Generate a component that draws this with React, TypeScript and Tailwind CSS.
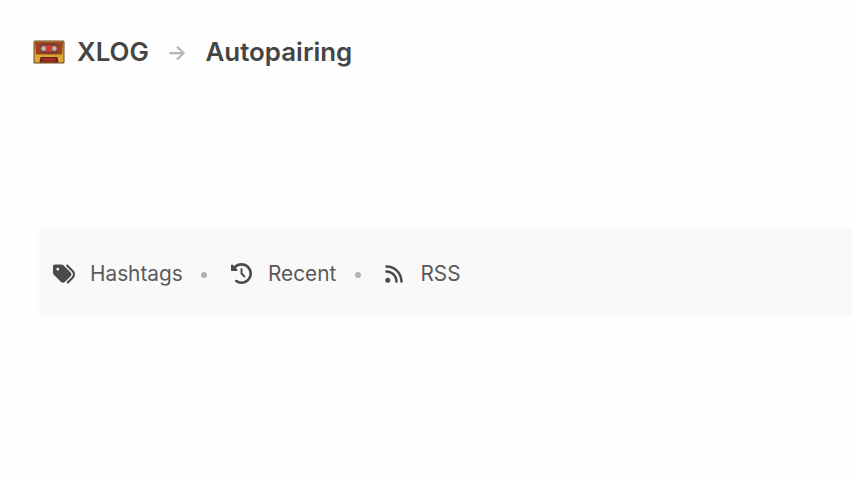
import { Fragment } from "react";
import { FaTags, FaClockRotateLeft, FaRss } from "react-icons/fa6";

function Cassette() {
  return (
    <svg width="32" height="24" viewBox="0 0 32 24" aria-hidden="true">
      <rect x="0.5" y="0.5" width="31" height="23" rx="1.5" fill="#6a4626" />
      <rect x="1.5" y="1.5" width="29" height="21" rx="1" fill="#dba833" />
      <path d="M2 2H30L29 14.5H3Z" fill="#9c4420" />
      <rect x="7" y="4" width="18" height="9" rx="3" fill="#57393a" />
      <rect x="13" y="5" width="6" height="7" fill="#d23a2c" />
      <circle cx="10.5" cy="8.5" r="3.4" fill="#a84b43" />
      <circle cx="21.5" cy="8.5" r="3.4" fill="#a84b43" />
      <circle cx="10.7" cy="8.5" r="2.2" fill="#b9bcc0" />
      <circle cx="21.3" cy="8.5" r="2.2" fill="#b9bcc0" />
      <path d="M6.5 22.5L7.5 17H24.5L25.5 22.5Z" fill="#64241a" />
      <path d="M9 21.5L9.8 18H22.2L23 21.5Z" fill="#a32c20" />
    </svg>
  );
}

const links = [
  { label: "Hashtags", Icon: FaTags, box: "w-[37px]", size: 22 },
  { label: "Recent", Icon: FaClockRotateLeft, box: "w-[37px]", size: 21 },
  { label: "RSS", Icon: FaRss, box: "w-[36px]", size: 20 },
];

export default function App() {
  return (
    <div className="h-[480px] w-[852px] overflow-hidden bg-[#fefefe] pt-[34px] font-['Inter',sans-serif] text-[#454545]">
      <header className="flex h-9 items-center pl-[33px] text-[25.9px] font-semibold">
        <Cassette />
        <span className="ml-[12px] w-[90px]">XLOG</span>
        <span className="w-[38.5px] pt-[2px] text-[21px] font-semibold text-[#b5b5b5]">→</span>
        <span className="pt-px">Autopairing</span>
      </header>
      <nav className="mt-[158px] ml-[35px] flex h-[89px] items-center border-l-[5px] border-[#fdfcfc] bg-[#faf9f9] pl-[13px] pt-[2px] text-[20.8px] text-[#5a5a5a]">
        {links.map(({ label, Icon, box, size }, i) => (
          <Fragment key={label}>
            {i > 0 && <span className="mr-[23.5px] ml-[18.7px] mt-[2px] size-[6px] rounded-full bg-[#b2b2b2]" />}
            <span className={`${box} shrink-0 text-[#4a4a4a]`}>
              <Icon size={size} />
            </span>
            <span className="pt-px">{label}</span>
          </Fragment>
        ))}
      </nav>
    </div>
  );
}
